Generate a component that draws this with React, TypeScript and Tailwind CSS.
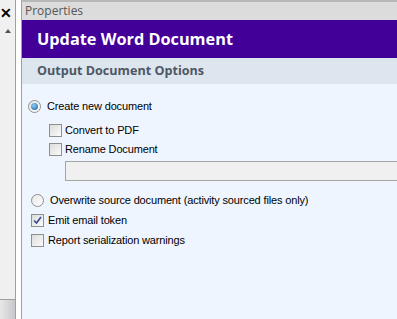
import React from 'react';

const ui = { fontFamily: '"Liberation Sans", Arial, sans-serif', letterSpacing: '-0.15px' };
const head = { fontFamily: '"Open Sans", "DejaVu Sans", sans-serif', letterSpacing: '0' };

function Radio({ checked }: { checked?: boolean }) {
  return (
    <span className="flex size-[13px] shrink-0 items-center justify-center rounded-full border border-[#8e8f8f] bg-gradient-to-br from-[#e6e6e6] to-[#ffffff]">
      {checked && (
        <span className="size-[7px] rounded-full bg-[radial-gradient(circle_at_40%_35%,#8fd0f5,#1a5a9a)]" />
      )}
    </span>
  );
}

function Check({ checked }: { checked?: boolean }) {
  return (
    <span className="flex size-[13px] shrink-0 items-center justify-center border border-[#8e8f8f] bg-gradient-to-br from-[#dcdcdc] to-[#fbfbfb]">
      {checked && (
        <svg width="9" height="9" viewBox="0 0 9 9">
          <path d="M1 4.5 L3.5 7 L8 1" fill="none" stroke="#3b4a8c" strokeWidth="1.6" />
        </svg>
      )}
    </span>
  );
}

export default function App() {
  return (
    <div className="flex h-[319px] w-[397px] overflow-hidden bg-white text-[11px] text-black" style={ui}>
      {/* Left docked strip */}
      <div className="flex w-[16px] shrink-0 flex-col border-r border-[#a0a0a0] bg-[#f0f0f0]">
        <div className="flex h-[24px] items-start pt-[6px] text-[14px] font-bold leading-none">✕</div>
        <div className="flex h-[14px] items-center justify-center">
          <svg width="6" height="4" viewBox="0 0 6 4">
            <path d="M0 4 L3 0 L6 4 Z" fill="#555" />
          </svg>
        </div>
        <div className="flex-1" />
        <div className="h-[20px] border-t border-[#a0a0a0] bg-gradient-to-r from-[#e8e8e8] to-[#c8c8cc]" />
      </div>
      <div className="w-[5px] shrink-0 bg-white" />

      {/* Properties panel */}
      <div className="flex flex-1 flex-col border-l border-t-2 border-[#a0a0a0] border-t-[#b8b8b8] bg-[#eef5ff]">
        <div className="flex h-[18px] items-center bg-[#dcdcdc] pl-[3px] text-[12px] text-[#555]" style={head}>
          Properties
        </div>
        <div className="flex h-[38px] items-center bg-[#420099] pl-[15px] text-[16.3px] font-bold text-white" style={head}>
          Update Word Document
        </div>
        <div className="flex h-[26px] items-center bg-[#dde5ef] pl-[15px] text-[12.6px] font-bold text-[#4d5763]" style={head}>
          Output Document Options
        </div>

        <div className="flex flex-col pt-[14px]">
          <label className="flex h-[16px] items-center gap-[6px] pl-[6px]">
            <Radio checked />
            <span>Create new document</span>
          </label>
          <div className="flex flex-col gap-[3px] pl-[27px] pt-[8px]">
            <label className="flex h-[16px] items-center gap-[3px]">
              <Check />
              <span>Convert to PDF</span>
            </label>
            <label className="flex h-[16px] items-center gap-[3px]">
              <Check />
              <span>Rename Document</span>
            </label>
          </div>
          <div className="ml-[43px] mt-[4px] h-[20px] border-y border-l border-[#a5a5a5] bg-[#f0f0f0]" />

          <label className="mt-[11px] flex h-[16px] items-center gap-[6px] pl-[9px]">
            <Radio />
            <span>Overwrite source document (activity sourced files only)</span>
          </label>
          <div className="flex flex-col gap-[4px] pl-[9px] pt-[4px]">
            <label className="flex h-[16px] items-center gap-[4px]">
              <Check checked />
              <span>Emit email token</span>
            </label>
            <label className="flex h-[16px] items-center gap-[4px]">
              <Check />
              <span>Report serialization warnings</span>
            </label>
          </div>
        </div>
      </div>
    </div>
  );
}
